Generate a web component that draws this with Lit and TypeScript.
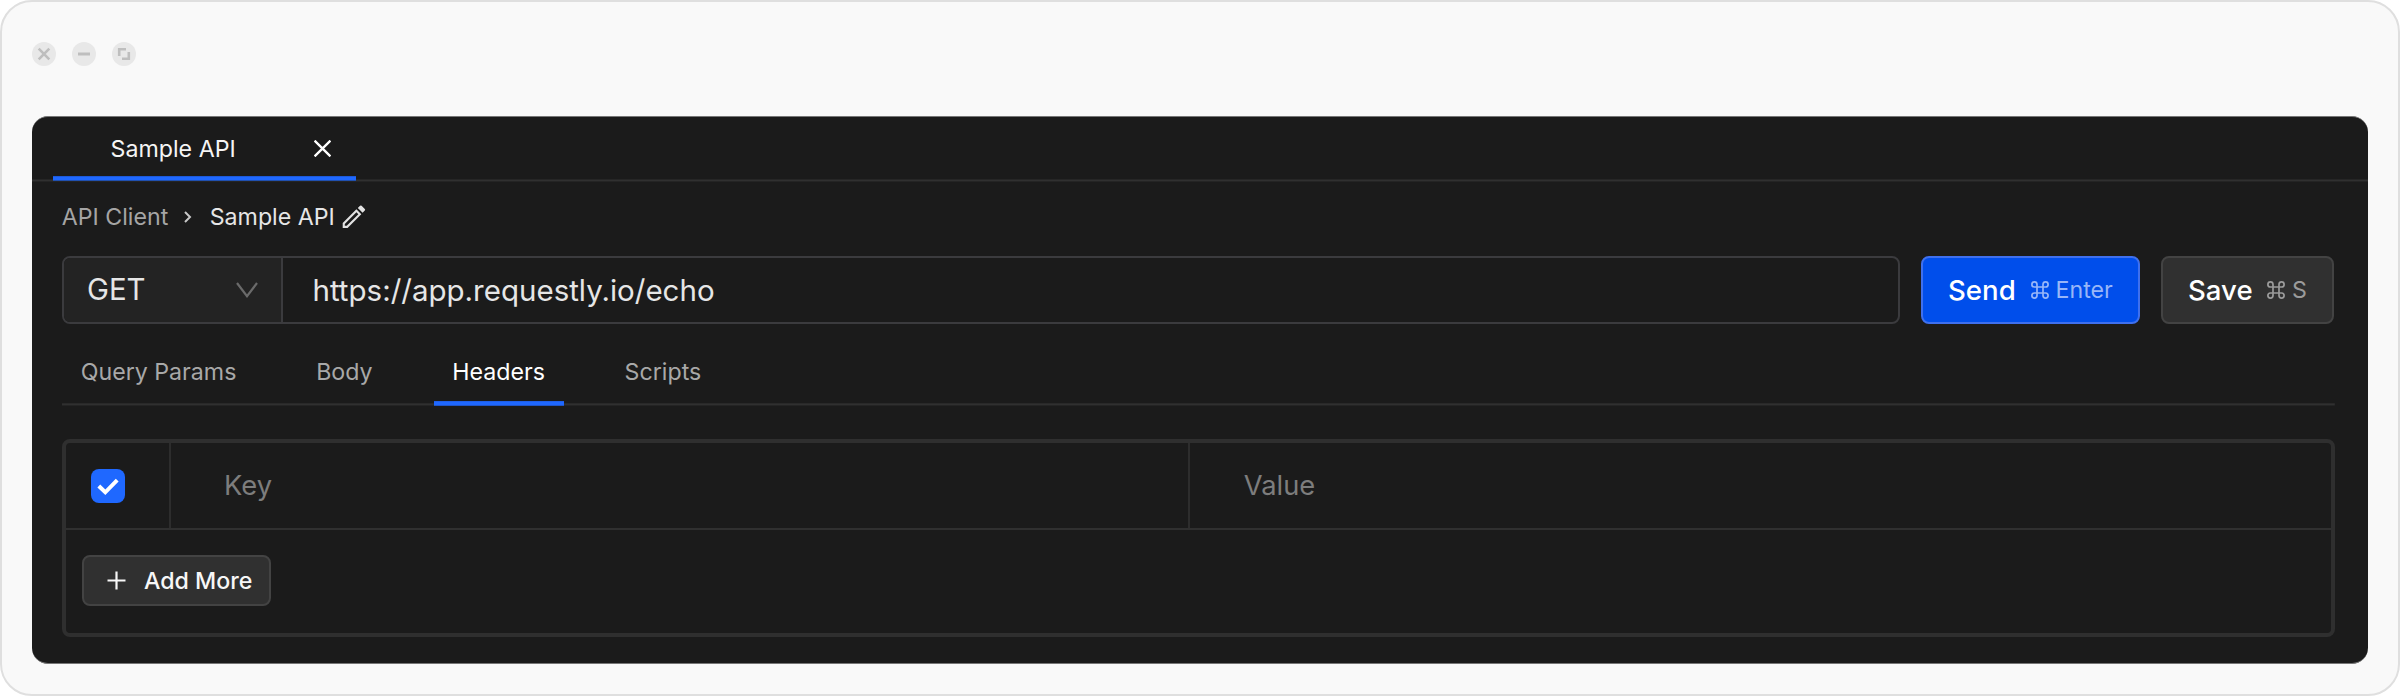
import { LitElement, html, css, svg } from "lit";
import { customElement, state } from "lit/decorators.js";
import { classMap } from "lit/directives/class-map.js";

const commandIcon = html`<svg class="cmd" viewBox="0 0 18 18" width="18" height="18" fill="none" stroke="currentColor" stroke-width="1.7">
  <path d="M6 6V3.4A2.55 2.55 0 1 0 3.4 6H14.6A2.55 2.55 0 1 0 12 3.4V14.6A2.55 2.55 0 1 0 14.6 12H3.4A2.55 2.55 0 1 0 6 14.6Z"/>
</svg>`;

const windowGlyphs = [
  svg`<path d="M6.7 6.7 17.3 17.3M17.3 6.7 6.7 17.3" stroke-width="2.6"/>`,
  svg`<path d="M6 12H18" stroke-width="3"/>`,
  svg`<path d="M7.2 14V7.2H14M10 16.8H16.8V10" stroke-width="2.6"/>`,
];

@customElement("window-controls")
class WindowControls extends LitElement {
  static styles = css`
    :host { display: flex; gap: 16px; }
    .dot { width: 24px; height: 24px; display: block; }
  `;
  render() {
    return windowGlyphs.map(
      (g) => html`<svg class="dot" viewBox="0 0 24 24" fill="none" stroke="#bebebe">
        <circle cx="12" cy="12" r="12" fill="#e8e8e8" stroke="none" />${g}
      </svg>`
    );
  }
}

@customElement("app-root")
class AppRoot extends LitElement {
  @state() private active = "Headers";

  static styles = css`
    :host { display: block; width: 2400px; height: 696px; background: #fff; }
    * { box-sizing: border-box; }
    svg { display: block; flex: none; }
    .window {
      height: 696px; border: 2px solid #dfdfdf; border-radius: 32px; background: #f9f9f9;
      padding: 40px 30px 30px; font: 400 23.2px/32px Inter, sans-serif; color: #fff;
      white-space: nowrap;
    }
    .panel {
      margin-top: 50px; height: 548px; background: #1b1b1b; border-radius: 16px;
      border-top: 1px solid #777; border-bottom: 1px solid #777; overflow: hidden;
    }
    .tabbar {
      height: 65px; padding-left: 21px; display: flex;
      background: linear-gradient(#262626 0 1px, #303030 1px 2px, #242424 2px) bottom / 100% 3px no-repeat;
    }
    .filetab {
      width: 303px; height: 64px; padding: 0 0 1px 57.6px; display: flex; align-items: center;
      background: linear-gradient(#1d5ad9 0 1px, #1f68ff 1px 4px, #2050b0 4px) bottom / 100% 5px no-repeat;
    }
    .filetab span { flex: none; width: 203.4px; color: #f5f5f5; }
    .crumbs, .method, .url { color: #e6e6e6; }
    .content { padding: 0 33.5px 0 30px; }
    .crumbs { display: flex; align-items: center; height: 69px; margin-left: -.3px; }
    .crumbs .parent { color: #a5a5a5; width: 122.5px; }
    .crumbs .angle { margin-right: 17.5px; }
    .crumbs .name { width: 132px; }
    .request { display: flex; margin-top: 5px; height: 68px; font-size: 29.4px; line-height: 40px; }
    .field {
      width: 1838px; height: 68px; display: flex; border-radius: 8px; border: 2px solid #3b3b3e; overflow: hidden;
    }
    .method {
      width: 217px; padding: 0 23px 0 23px; display: flex; align-items: center;
      justify-content: space-between; background: #232323;
    }
    .url { border-left: 2px solid #3b3b3e; padding-left: 29.5px; display: flex; align-items: center; font-size: 29.5px; }
    .btn {
      border-radius: 8px; border: 2px solid #434343; background: #303030; display: flex;
      align-items: center; font-weight: 500;
    }
    .big { height: 68px; font-size: 27.6px; padding-left: 25px; }
    .big small { font-size: 23.2px; font-weight: 400; margin-left: 7px; }
    .send { width: 219px; margin-left: 21px; background: #004eeb; border-color: #3f70ee; }
    .send .label { width: 82.5px; }
    .send small, .send .cmd { color: #98b6f8; }
    .save { width: 173px; margin-left: 21px; }
    .save .label { width: 79px; }
    .save small, .save .cmd { color: #9b9b9b; }
    .tabs {
      display: flex; height: 82px;
      background: linear-gradient(#292929 0 1px, #303030 1px 2px, #242424 2px) bottom / 100% 3px no-repeat;
    }
    .tab { height: 82px; padding: 13px 19px 0 18.7px; margin-right: 42px; color: #a8a8a8; display: flex; align-items: center; }
    .tab.on {
      color: #fff;
      background: linear-gradient(#1e5fe8 0 1px, #1f68ff 1px 4px, #1f55c8 4px) bottom / 100% 5px no-repeat;
    }
    .table { margin-top: 33px; height: 198px; border: 4px solid #2f2f2f; border-radius: 8px; }
    .row { display: grid; grid-template-columns: 103px 1019px 1fr; height: 87px; border-bottom: 2px solid #303030; }
    .cell { display: flex; align-items: center; padding-left: 53px; font-size: 27.3px; color: #7d7d7d; border-left: 2px solid #2d2d2d; }
    .cell:first-child { border-left: 0; padding-left: 25px; }
    .cell:last-child { padding-left: 53.8px; }
    .add { margin: 25px 0 0 16px; width: 189px; height: 51px; padding-left: 23px; }
    .add span { margin-left: 18px; color: #f7f7f7; }
  `;

  render() {
    return html`
      <div class="window">
        <window-controls></window-controls>
        <div class="panel">
          <div class="tabbar">
            <div class="filetab">
              <span>Sample API</span>
              <svg width="17" height="17" viewBox="0 0 17 17" stroke="#fff" stroke-width="2.3"><path d="M.6.6 16.4 16.4M16.4.6.6 16.4" /></svg>
            </div>
          </div>
          <div class="content">
            <div class="crumbs">
              <span class="parent">API Client</span>
              <svg class="angle" width="8" height="12" viewBox="0 0 8 12" fill="none" stroke="#c8c8c8" stroke-width="2"><path d="M1 1 6 6 1 11" /></svg>
              <span class="name">Sample API</span>
              <svg width="24" height="24" viewBox="0 0 24 24" fill="#e2e2e2">
                <path fill-rule="evenodd" d="M.7 18 14.4 4.3 19.3 9.2 5.6 22.9H.7ZM2.8 18.9V20.8H4.7L16.4 9.2 14.4 7.2Z" />
                <path d="M15.8 3 18 .8Q18.8 0 19.6.8L22.8 4Q23.6 4.8 22.8 5.6L20.6 7.8Z" />
              </svg>
            </div>
            <div class="request">
              <div class="field">
                <div class="method">
                  <span>GET</span>
                  <svg width="22" height="16" viewBox="0 0 22 16" fill="none" stroke="#6a6a6a" stroke-width="2.2"><path d="M1 1 11 14.2 21 1" /></svg>
                </div>
                <div class="url">https://app.requestly.io/echo</div>
              </div>
              <div class="btn big send"><span class="label">Send</span>${commandIcon}<small>Enter</small></div>
              <div class="btn big save"><span class="label">Save</span>${commandIcon}<small>S</small></div>
            </div>
            <div class="tabs">
              ${["Query Params", "Body", "Headers", "Scripts"].map(
                (t) => html`<div class=${classMap({ tab: true, on: t === this.active })} @click=${() => (this.active = t)}>${t}</div>`
              )}
            </div>
            <div class="table">
              <div class="row">
                <div class="cell">
                  <svg width="34" height="34" viewBox="0 0 34 34"><rect width="34" height="34" rx="8" fill="#1f68ff" /><path d="M7.8 17 14.3 23.3 26.2 11.2" fill="none" stroke="#fff" stroke-width="4" /></svg>
                </div>
                <div class="cell">Key</div>
                <div class="cell">Value</div>
              </div>
              <div class="btn add">
                <svg width="19" height="19" viewBox="0 0 19 19" stroke="#f7f7f7" stroke-width="2.2"><path d="M9.5.5V18.5M.5 9.5H18.5" /></svg>
                <span>Add More</span>
              </div>
            </div>
          </div>
        </div>
      </div>
    `;
  }
}
